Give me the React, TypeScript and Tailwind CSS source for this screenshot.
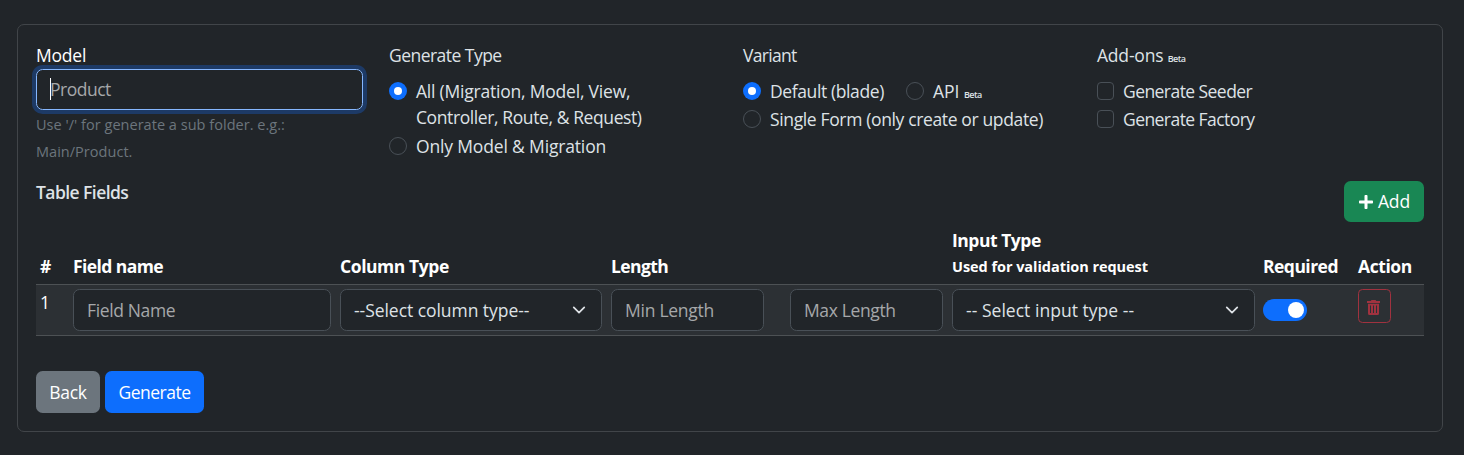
import { ReactNode } from "react";
import { FaPlus } from "react-icons/fa";

function Control({ kind, checked = false }: { kind: "radio" | "checkbox"; checked?: boolean }) {
  if (kind === "checkbox") {
    return <span className="mt-[4px] h-[18px] w-[17px] shrink-0 rounded-[4px] border border-[#495057]" />;
  }
  return checked ? (
    <span className="mt-[4px] flex size-[18px] shrink-0 items-center justify-center rounded-full bg-[#0d6efd]">
      <span className="size-[8px] rounded-full bg-white" />
    </span>
  ) : (
    <span className="mt-[4px] size-[18px] shrink-0 rounded-full border border-[#495057]" />
  );
}

function Option({ kind = "radio", checked, children }: { kind?: "radio" | "checkbox"; checked?: boolean; children: ReactNode }) {
  return (
    <label className="mb-[2px] flex min-h-[26px] gap-[9px] leading-[26px]">
      <Control kind={kind} checked={checked} />
      <span className="whitespace-nowrap">{children}</span>
    </label>
  );
}

function Beta() {
  return <span className="text-[9px] font-semibold leading-none tracking-[-0.55px]">Beta</span>;
}

function Chevron() {
  return (
    <svg viewBox="0 0 16 16" className="size-[14px]" fill="none" stroke="#dee2e6" strokeWidth="2" strokeLinecap="round" strokeLinejoin="round">
      <path d="m2 5 6 6 6-6" />
    </svg>
  );
}

function Trash() {
  return (
    <svg viewBox="0 0 13 15" className="h-[15px] w-[13px]" fill="currentColor">
      <path d="M4.5 0h4l.8 1H13v2H0V1h3.700z" />
      <path fillRule="evenodd" d="M1 3.800h11V13.500a1.500 1.500 0 0 1-1.500 1.500h-8A1.500 1.500 0 0 1 1 13.500zM3 5.500v7.500h1V5.500zM6 5.500v7.500h1V5.500zM9 5.500v7.500h1V5.500z" />
    </svg>
  );
}

const field = "flex h-[42px] items-center rounded-[6.6px] border border-[#495057] bg-[#212529] px-[13px] whitespace-nowrap";

export default function App() {
  return (
    <div className="h-[455px] overflow-hidden bg-[#212529] pl-[17px] pr-[21px] pt-[24px] font-['Open_Sans','Noto_Sans',sans-serif] text-[17.5px] leading-[26.4px] text-[#dee2e6]">
      <div className="h-[408px] rounded-[7px] border border-[#414549] px-[18px] pt-[17px]">
        <div className="grid h-[139px] grid-cols-[353px_354px_354px_1fr]">
          <div className="pr-[26px]">
            <div className="mb-[0.6px] tracking-[-0.2px] text-white">Model</div>
            <div className="flex h-[41px] items-center rounded-[6.6px] border border-[#86b7fe] px-[13px] pb-px tracking-[-0.5px] text-[#a6a8aa] shadow-[0_0_0_4px_#1d3a66]">
              <span className="-mr-px h-[22px] w-px bg-white" />
              Product
            </div>
            <div className="mt-[1.4px] w-[300px] text-[14.5px] leading-[27px] tracking-[0.03px] text-[#6c757d]">
              Use '/' for generate a sub folder. e.g.:
              <br />
              Main/Product.
            </div>
          </div>
          <div>
            <div className="mb-[9.6px] tracking-[-0.53px]">Generate Type</div>
            <div className="mb-[3px]">
              <Option checked>
                <span className="tracking-[-0.21px]">All (Migration, Model, View,</span>
                <br />
                <span className="tracking-[-0.4px]">Controller, Route, &amp; Request)</span>
              </Option>
            </div>
            <Option>
              <span className="tracking-[-0.16px]">Only Model &amp; Migration</span>
            </Option>
          </div>
          <div>
            <div className="mb-[9.6px] tracking-[-0.7px]">Variant</div>
            <div className="flex gap-[22px]">
              <Option checked>
                <span className="tracking-[-0.39px]">Default (blade)</span>
              </Option>
              <Option>
                API <Beta />
              </Option>
            </div>
            <Option>
              <span className="tracking-[-0.36px]">Single Form (only create or update)</span>
            </Option>
          </div>
          <div>
            <div className="mb-[9.6px] tracking-[-0.2px]">
              Add-ons <Beta />
            </div>
            <Option kind="checkbox">
              <span className="tracking-[-0.56px]">Generate Seeder</span>
            </Option>
            <Option kind="checkbox">
              <span className="tracking-[-0.56px]">Generate Factory</span>
            </Option>
          </div>
        </div>

        <div className="flex h-[41px] justify-between">
          <h6 className="-mt-[2px] font-semibold tracking-[-0.56px]">Table Fields</h6>
          <button className="flex h-[41px] w-[80px] items-center justify-center gap-[4px] rounded-[6.6px] bg-[#198754] tracking-[-0.1px] text-white">
            <FaPlus className="size-[16px]" />
            Add
          </button>
        </div>

        <div className="mt-[6px]">
          <div className="grid h-[57px] grid-cols-[37px_267px_271px_341px_311px_95px_1fr] items-end border-b border-[#4d5154] pb-[6px] font-bold text-white">
            <span className="pl-[4px]">#</span>
            <span className="tracking-[-0.57px]">Field name</span>
            <span className="tracking-[-0.43px]">Column Type</span>
            <span className="tracking-[-0.6px]">Length</span>
            <div className="-mb-px whitespace-nowrap">
              <div className="-mt-px mb-px tracking-[-0.47px]">Input Type</div>
              <div className="text-[14.5px] tracking-[-0.05px]">Used for validation request</div>
            </div>
            <span className="tracking-[-0.53px]">Required</span>
            <span className="tracking-[-0.43px]">Action</span>
          </div>
          <div className="grid h-[51px] grid-cols-[37px_267px_271px_179px_162px_311px_95px_1fr] border-b border-[#4d5154] bg-[#2c3034] pt-[4px]">
            <span className="pl-[4px] text-white">1</span>
            <div className={`${field} w-[258px] tracking-[-0.36px] text-[#a6a8aa]`}>Field Name</div>
            <div className={`${field} w-[262px] justify-between pr-[15px] tracking-[-0.05px]`}>
              --Select column type--
              <Chevron />
            </div>
            <div className={`${field} w-[153px] tracking-[-0.26px] text-[#a6a8aa]`}>Min Length</div>
            <div className={`${field} w-[153px] tracking-[-0.37px] text-[#a6a8aa]`}>Max Length</div>
            <div className={`${field} w-[303px] justify-between pr-[15px] tracking-[0.03px]`}>
              -- Select input type --
              <Chevron />
            </div>
            <div className="pt-[10px]">
              <div className="flex h-[22px] w-[44px] items-center justify-end rounded-full bg-[#0d6efd] pr-[3px]">
                <span className="size-[16px] rounded-full bg-white" />
              </div>
            </div>
            <button className="flex h-[34px] w-[33px] items-start justify-start rounded-[4.4px] border border-[#a0323f] pl-[8px] pt-[10px] text-[#a0323f]">
              <Trash />
            </button>
          </div>
        </div>

        <div className="mt-[35px] flex gap-[5px] text-white">
          <button className="h-[42px] w-[64px] rounded-[6.6px] bg-[#6c757d] tracking-[-0.3px]">Back</button>
          <button className="h-[42px] w-[99px] rounded-[6.6px] bg-[#0d6efd] tracking-[-0.5px]">Generate</button>
        </div>
      </div>
    </div>
  );
}
